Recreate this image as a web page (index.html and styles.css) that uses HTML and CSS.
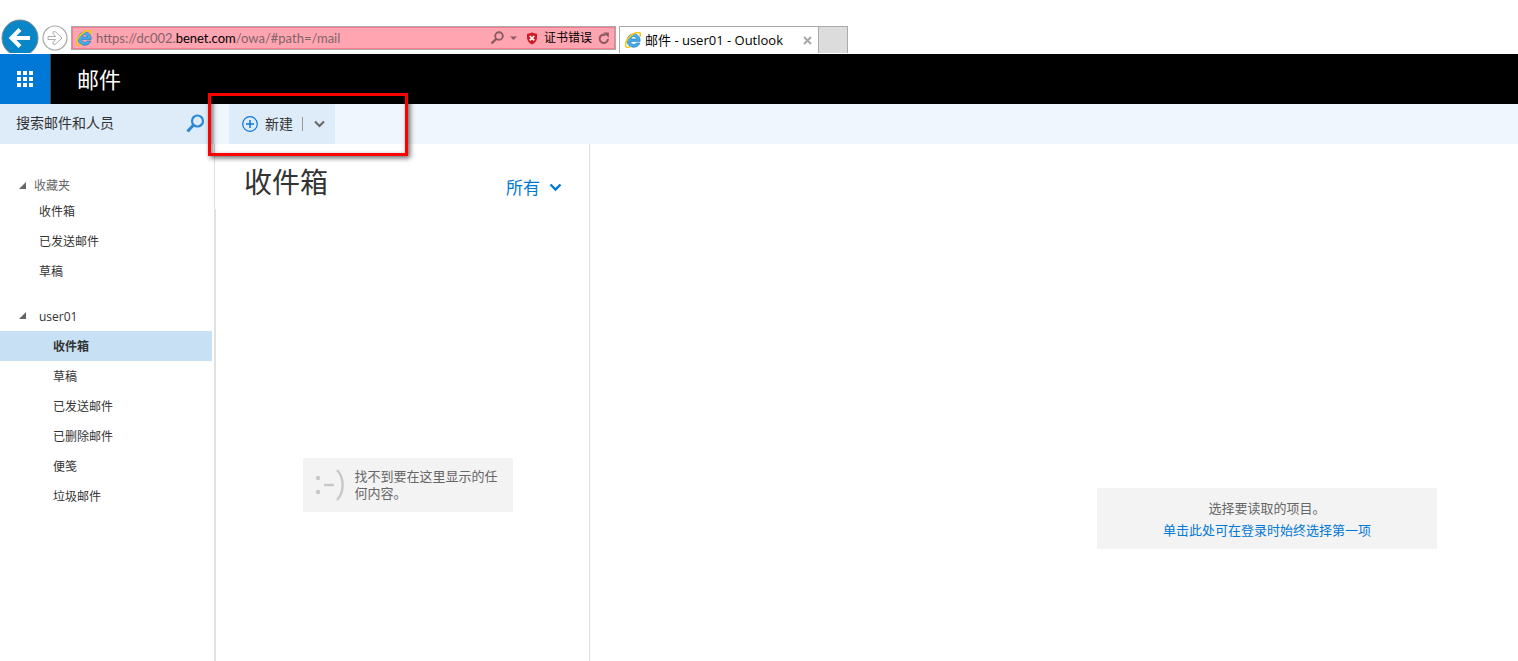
FILE: index.html
```html
<!DOCTYPE html>
<html lang="zh-CN">
<head>
<meta charset="utf-8">
<title>邮件 - user01 - Outlook</title>
<link rel="stylesheet" href="styles.css">
</head>
<body>
<svg class="sprite" width="0" height="0" aria-hidden="true">
  <symbol id="ie" viewBox="0 0 16 16">
    <path d="M15.200 9.400H5.800c.2 1.900 1.400 2.900 3 2.900 1.100 0 2-.4 2.500-1.300h3.600c-.8 2.600-3.100 4.200-6.100 4.200-4 0-6.700-2.600-6.700-6.500S4.800 2 8.700 2c4.100 0 6.600 2.800 6.500 7.400zM5.900 7h5.700c-.2-1.500-1.300-2.400-2.900-2.400S6.200 5.500 5.900 7z" fill="#45ade8" stroke="#1673b8" stroke-width=".6"/>
    <path d="M1.300 15C-1 12.500 2 6.500 6.300 3.300 10.300.3 14.200-.1 15.100 1.300c.6.900.3 2-.3 3.200" fill="none" stroke="#f5c518" stroke-width="1.700"/>
    <path d="M1.300 15c1 .8 2.500.4 4.200-.6" fill="none" stroke="#f5c518" stroke-width="1.500"/>
  </symbol>
</svg>
<header class="browser">
  <button class="back" aria-label="后退">
    <svg width="38" height="38" viewBox="0 0 38 38"><circle cx="19" cy="19" r="18" fill="#0886c8" stroke="#77868f" stroke-width="1"/><path d="M29 19H11M19 10.500 10.500 19l8.500 8.500" fill="none" stroke="#fff" stroke-width="4"/></svg>
  </button>
  <button class="forward" aria-label="前进">
    <svg width="26" height="26" viewBox="0 0 26 26"><circle cx="13" cy="13" r="12" fill="#fff" stroke="#aaa" stroke-width="1.200"/><path d="M6 11.500h7.500L11 8.500V6.800h2.500l6.500 6.200-6.500 6.200H11v-1.700l2.500-3H6z" fill="#fff" stroke="#aaa"/></svg>
  </button>
  <div class="address">
    <svg width="16" height="16"><use href="#ie"/></svg>
    <span class="url">https://dc002.<b>benet.com</b>/owa/#path=/mail</span>
    <button class="find" aria-label="搜索">
      <svg width="28" height="14" viewBox="0 0 28 14"><circle cx="9" cy="5" r="3.800" fill="none" stroke="#8c5a61" stroke-width="1.900"/><path d="M6.500 7.700 1.500 12.500" stroke="#8c5a61" stroke-width="2.400"/><path d="M20 5.500h7L23.500 9z" fill="#8c5a61"/></svg>
    </button>
    <button class="cert">
      <svg width="12" height="13" viewBox="0 0 12 13"><path d="M6 .5 11 2v3.500c0 3.500-2 5.600-5 7-3-1.400-5-3.500-5-7V2z" fill="#cf1b24"/><path d="m3.800 4 4.400 4.400m0-4.400L3.800 8.400" stroke="#fff" stroke-width="1.700"/></svg>
      <span>证书错误</span>
    </button>
    <button class="reload" aria-label="刷新">
      <svg width="12" height="13" viewBox="0 0 12 13"><path d="M10 7A4.200 4.200 0 1 1 7.500 3" fill="none" stroke="#8c5a61" stroke-width="2"/><path d="M5.500.5h5.300v5.300z" fill="#8c5a61"/></svg>
    </button>
  </div>
  <div class="tab">
    <svg width="16" height="16"><use href="#ie"/></svg>
    <span class="tab-title">邮件 - user01 - Outlook</span>
    <button aria-label="关闭标签页"><svg width="9" height="9" viewBox="0 0 9 9"><path d="m1 1 7 7m0-7L1 8" stroke="#a6a6a6" stroke-width="1.900"/></svg></button>
  </div>
  <button class="new-tab" aria-label="新建标签页"></button>
</header>
<div class="suite">
  <button class="launcher" aria-label="应用启动器">
    <svg width="16" height="16" viewBox="0 0 16 16" fill="#fff"><path d="M0 0h4v4H0zM6 0h4v4H6zM12 0h4v4h-4zM0 6h4v4H0zM6 6h4v4H6zM12 6h4v4h-4zM0 12h4v4H0zM6 12h4v4H6zM12 12h4v4h-4z"/></svg>
  </button>
  <h1>邮件</h1>
</div>
<div class="commands">
  <form class="search">
    <input type="text" placeholder="搜索邮件和人员" aria-label="搜索邮件和人员">
    <button type="button" aria-label="搜索"><svg width="19" height="19" viewBox="0 0 19 19" fill="none" stroke="#2b88d8"><circle cx="11.500" cy="7" r="5.500" stroke-width="2.200"/><path d="m7.500 11-6 6.500" stroke-width="3"/></svg></button>
  </form>
  <div class="actions">
    <div class="new">
      <button class="new-mail">
        <svg width="16" height="16" viewBox="0 0 16 16" fill="none" stroke="#0a78d7"><circle cx="8" cy="8" r="7.300" stroke-width="1.200"/><path d="M8 4v8M4 8h8" stroke-width="1.500"/></svg>
        <span>新建</span>
      </button>
      <span class="divider"></span>
      <button class="more" aria-label="更多新建选项"><svg width="11" height="8" viewBox="0 0 11 8"><path d="m1 1.500 4.500 4.500L10 1.500" fill="none" stroke="#666" stroke-width="2"/></svg></button>
    </div>
    <div class="highlight"></div>
  </div>
</div>
<main>
  <nav>
    <section class="favorites">
      <h2><svg width="7" height="8"><path d="M7 0v7H0z" fill="#666"/></svg>收藏夹</h2>
      <ul><li><a href="#">收件箱</a></li><li><a href="#">已发送邮件</a></li><li><a href="#">草稿</a></li></ul>
    </section>
    <section class="account">
      <h2><svg width="7" height="10"><path d="M7 0v7H0z" fill="#666"/></svg>user01</h2>
      <ul><li><a class="current" href="#">收件箱</a></li><li><a href="#">草稿</a></li><li><a href="#">已发送邮件</a></li><li><a href="#">已删除邮件</a></li><li><a href="#">便笺</a></li><li><a href="#">垃圾邮件</a></li></ul>
    </section>
  </nav>
  <section class="list">
    <header class="list-head">
      <h2>收件箱</h2>
      <button>所有<svg width="13" height="9" viewBox="0 0 13 9"><path d="m1.500 1.500 5 5 5-5" fill="none" stroke="#0078d7" stroke-width="2.400"/></svg></button>
    </header>
    <div class="list-body">
      <div class="empty">
        <svg width="30" height="32" viewBox="0 0 30 32" fill="none" stroke="#c8c8c8"><g fill="#c8c8c8" stroke="none"><circle cx="3" cy="9" r="2.200"/><circle cx="3" cy="23" r="2.200"/></g><path d="M9 16h10" stroke-width="2.400"/><path d="M22 1c7.500 8 7.500 22 0 30" stroke-width="2.400"/></svg>
        <p>找不到要在这里显示的任何内容。</p>
      </div>
    </div>
  </section>
  <section class="reading">
    <div class="prompt">
      <p>选择要读取的项目。</p>
      <a href="#">单击此处可在登录时始终选择第一项</a>
    </div>
  </section>
</main>
</body>
</html>
```
FILE: styles.css
```css
* { box-sizing: border-box; }
body {
  margin: 0;
  min-height: 100vh;
  display: flex;
  flex-direction: column;
  background: #fff;
  color: #333;
  font: 12px/18px "Open Sans", "Noto Sans CJK SC", sans-serif;
}
button, input { font: inherit; color: inherit; border: 0; padding: 0; background: none; }
button { display: flex; align-items: center; }
h1, h2, p, ul { margin: 0; padding: 0; font-weight: normal; }
ul { list-style: none; }
a { color: inherit; text-decoration: none; }
svg { flex: none; display: block; }
.sprite { position: absolute; }

.browser {
  display: flex;
  height: 54px;
  padding: 19px 0 0 1px;
  border-bottom: 1px solid #fff;
  overflow: hidden;
  color: #000;
}
.browser > * { flex: none; }
.back { align-items: flex-start; }
.forward { margin: 6px 3px 0 3px; align-items: flex-start; }
.address {
  display: flex;
  align-items: center;
  width: 545px;
  height: 24px;
  margin-top: 7px;
  padding: 0 5px 0 4px;
  background: #ffa5b1;
  border: 1px solid #aaa;
  box-shadow: inset 0 0 0 1px #f77b8c;
}
.url { flex: 1; margin-left: 4px; font-family: Lato, sans-serif; font-size: 13px; color: #80646a; }
.url b { font-weight: normal; color: #000; }
.cert { margin: 0 6px 0 8px; gap: 6px; }
.tab {
  display: flex;
  align-items: center;
  width: 200px;
  margin: 7px 0 0 3px;
  padding: 0 6px 0 5px;
  border: solid #aaa;
  border-width: 1px 1px 0;
}
.tab-title { flex: 1; margin-left: 4px; font-size: 13px; }
.new-tab { width: 29px; margin-top: 7px; background: #dcdcdc; border: solid #aaa; border-width: 1px 1px 0 0; }

.suite { display: flex; align-items: center; height: 50px; background: #000; color: #fff; }
.launcher { width: 51px; height: 50px; justify-content: center; background: #0078d7; border-right: 1px solid #444; }
.suite h1 { margin-left: 26px; font-size: 22px; line-height: 32px; }

.commands { display: flex; height: 40px; background: #eff6fd; }
.search { display: flex; align-items: center; width: 214px; padding: 0 9px 2px 16px; background: #deebf8; }
.search input { flex: 1; min-width: 0; font-size: 14px; }
.search input::placeholder { color: #333; opacity: 1; }
.actions { position: relative; flex: 1; display: flex; padding-left: 15px; }
.new { display: flex; align-items: center; width: 106px; padding: 0 10px 0 13px; background: #deebf8; }
.new-mail { gap: 7px; font-size: 14px; }
.divider { width: 1px; height: 14px; margin: 0 11px 0 9px; background: #999; }
.highlight {
  position: absolute;
  left: -6px;
  top: -11px;
  width: 200px;
  height: 63px;
  border: 3px solid #f00;
  box-shadow: 2px 2px 5px rgba(0, 0, 0, .6), inset 2px 2px 5px rgba(0, 0, 0, .5);
  pointer-events: none;
}

main { flex: 1; display: flex; }
nav { width: 215px; padding: 32px 2px 0 0; border-right: 1px solid #e1e1e1; }
nav h2 { display: flex; align-items: center; padding-left: 19px; font-size: 12px; }
.favorites h2 { gap: 8px; height: 20px; color: #666; }
.account { margin-top: 15px; }
.account h2 { gap: 13px; height: 30px; padding-top: 2px; }
nav a { display: block; padding: 2px 0 0 39px; line-height: 28px; }
.account a { padding-left: 53px; }
nav .current { background: #c7e0f4; font-weight: bold; }

.list { display: flex; flex-direction: column; width: 375px; border-right: 1px solid #e1e1e1; }
.list-head { display: flex; align-items: center; justify-content: space-between; height: 65px; padding: 10px 27px 0 29px; }
.list-head h2 { font-size: 28px; line-height: 40px; }
.list-head button { gap: 9px; margin-top: 12px; color: #0078d7; font-size: 17px; line-height: 24px; }
.list-body {
  flex: 1;
  display: flex;
  align-items: center;
  justify-content: center;
  padding: 190px 0 90px 10px;
  border-left: 1px solid #e1e1e1;
}
.empty { display: flex; align-items: center; gap: 10px; width: 210px; height: 54px; padding: 0 12px; background: #f3f3f3; color: #666; font-size: 13px; line-height: 17px; }
.reading { flex: 1; display: flex; align-items: center; justify-content: flex-end; padding: 232px 81px 0 0; }
.prompt { width: 340px; padding: 9px 0 8px; background: #f3f3f3; color: #666; font-size: 13px; line-height: 22px; text-align: center; }
.prompt a { color: #0078d7; }
```
